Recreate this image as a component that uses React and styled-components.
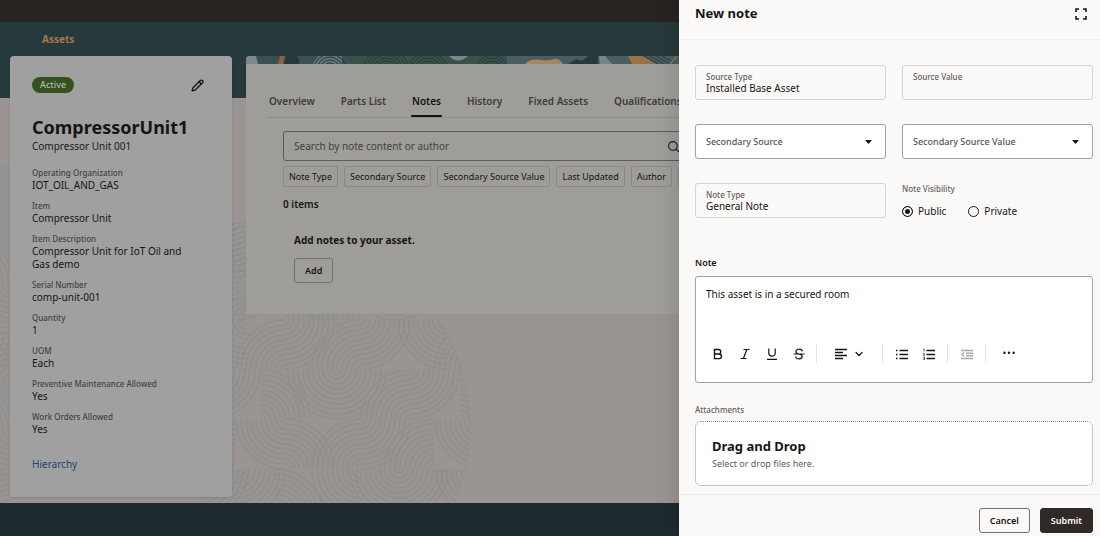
import { useState } from 'react';
import styled, { createGlobalStyle } from 'styled-components';
import { Pencil, Search, Ellipsis, ChevronDown } from 'lucide-react';

const details = [
    ['Operating Organization', 'IOT_OIL_AND_GAS'],
    ['Item', 'Compressor Unit'],
    ['Item Description', 'Compressor Unit for IoT Oil and Gas demo'],
    ['Serial Number', 'comp-unit-001'],
    ['Quantity', '1'],
    ['UOM', 'Each'],
    ['Preventive Maintenance Allowed', 'Yes'],
    ['Work Orders Allowed', 'Yes'],
];

const tabs = ['Overview', 'Parts List', 'Notes', 'History', 'Fixed Assets', 'Qualifications'];
const filters = ['Note Type', 'Secondary Source', 'Secondary Source Value', 'Last Updated', 'Author'];

// quarter circles of the backdrop: [cx, cy, quadrant]
const shells = [
    [231, 222, 'br'], [247, 271, 'tl'], [247, 320, 'tl'], [236, 271, 'br'],
    [285, 320, 'tr'], [330, 271, 'bl'], [361, 320, 'tl'], [395, 271, 'bl'], [395, 271, 'br'],
    [247, 320, 'bl'], [285, 369, 'tl'], [285, 320, 'br'], [361, 369, 'tl'], [361, 320, 'br'], [447, 320, 'bl'], [484, 369, 'tl'],
    [211, 370, 'br'], [261, 419, 'tr'], [337, 370, 'bl'], [337, 370, 'br'], [410, 419, 'tl'], [410, 370, 'br'], [460, 419, 'tr'],
    [285, 420, 'bl'], [236, 468, 'tl'], [285, 468, 'tr'], [361, 468, 'tl'], [361, 420, 'br'], [434, 468, 'tl'], [484, 420, 'bl'],
    [199, 469, 'br'], [236, 469, 'br'], [275, 518, 'tr'], [361, 469, 'bl'], [399, 469, 'bl'], [399, 469, 'br'], [485, 469, 'bl'],
    [-36, 284, 'tr'], [12, 284, 'bl'], [-30, 333, 'br'], [12, 382, 'tl'], [-36, 431, 'tr'], [12, 431, 'bl'], [12, 518, 'tl'],
];
const rings = [4, 9, 14, 19, 24, 29, 34, 39, 44, 49];

const ringPath = (cx, cy, quad, r) => {
    const sx = quad[1] === 'r' ? 1 : -1;
    const sy = quad[0] === 'b' ? 1 : -1;
    return `M${cx + sx * r} ${cy}A${r} ${r} 0 0 ${sx * sy > 0 ? 1 : 0} ${cx} ${cy + sy * r}`;
};

const Backdrop = () => (
    <BackdropSvg width="480" height="503" viewBox="0 0 480 503" aria-hidden="true">
        <clipPath id="disc">
            <path d="M0 163H247V503H0Z" />
            <circle cx="281" cy="425" r="190" />
        </clipPath>
        <path d="M0 167L12 162V503H0Z" fill="#969492" />
        <g clipPath="url(#disc)">
            {shells.map(([cx, cy, q]) => (
                <path key={`f${cx}-${cy}-${q}`} d={`${ringPath(cx, cy, q, 49)}L${cx} ${cy}Z`} fill="#979492" />
            ))}
            {shells.map(([cx, cy, q]) => (
                <path key={`r${cx}-${cy}-${q}`} d={rings.map((r) => ringPath(cx, cy, q, r)).join('')}
                    fill="none" stroke="#8f8d8b" strokeWidth="1.1" />
            ))}
        </g>
    </BackdropSvg>
);

const arcs = (cx, cy, list) => list.map((r) => <circle key={`${cx}-${r}`} cx={cx} cy={cy} r={r} />);

const BannerArt = () => (
    <svg width="450" height="8" viewBox="0 0 450 8" aria-hidden="true">
        <rect width="450" height="8" fill="#3a5053" />
        <path d="M0 0H10L12 8H0Z" fill="#7f888d" />
        <path d="M34 0H39L37 8H32Z" fill="#8f603c" />
        <path d="M40 0H51Q54 4 53 8H38Z" fill="#26383b" />
        <path d="M72 0H96V8H67Z" fill="#62737a" />
        <rect x="97" width="164" height="8" fill="#385149" />
        <g fill="none" stroke="#263b3d" strokeWidth="1">
            {arcs(84, 14, [4, 7, 10, 13, 16])}
            {arcs(140, 16, [5, 8, 11, 14, 17, 20, 23])}
            {arcs(182, 16, [5, 8, 11, 14, 17, 20])}
            {arcs(246, 15, [4, 7, 10, 13, 16])}
        </g>
        <path d="M203 0H222Q212 9 203 0Z" fill="#7b8790" />
        <path d="M261 0H450V8H261Z" fill="#4a5e62" />
        <path d="M279 8Q284 2 296 4Q304 5 308 3Q313 2 317 8Z" fill="#a58661" />
        <path d="M322 8L330 3Q336 7 342 0H352V8Z" fill="#26383b" />
        <path d="M353 0H359L366 8H354Z" fill="#76838a" />
        <path d="M382 0H396L410 8H386Z" fill="#9a7243" />
        <path d="M398 0L412 8M404 0L418 8M410 0L424 8M416 0L428 7" stroke="#2c4144" />
        <path d="M431 0L424 8" stroke="#9a7243" strokeWidth="1.5" />
    </svg>
);

const Icon = ({ d, children, w = 12, sw = 1.2 }) => (
    <svg width={w} height="12" viewBox={`0 0 ${w} 12`} fill="none" stroke="currentColor" strokeWidth={sw} aria-hidden="true">
        <path d={d} />
        {children}
    </svg>
);

const App = () => {
    const [note, setNote] = useState('This asset is in a secured room');
    const [visibility, setVisibility] = useState('Public');

    return (
        <Page>
            <GlobalStyle />
            <TopBar />
            <Content>
                <Backdrop />
                <PageTitle>Assets</PageTitle>
                <Columns>
                    <AssetCard>
                        <CardTop>
                            <Status>Active</Status>
                            <IconButton aria-label="Edit"><Pencil size={13} strokeWidth={2.4} /></IconButton>
                        </CardTop>
                        <AssetName>CompressorUnit1</AssetName>
                        <AssetText>Compressor Unit 001</AssetText>
                        <Details>
                            {details.map(([label, value]) => (
                                <div key={label}>
                                    <dt>{label}</dt>
                                    <dd>{value}</dd>
                                </div>
                            ))}
                        </Details>
                        <CardLink href="#hierarchy">Hierarchy</CardLink>
                    </AssetCard>
                    <NotesPanel>
                        <Banner><BannerArt /></Banner>
                        <Tabs>
                            {tabs.map((tab) => (
                                <Tab key={tab} $active={tab === 'Notes'}>{tab}</Tab>
                            ))}
                        </Tabs>
                        <NotesBody>
                            <SearchBox>
                                <input type="text" aria-label="Search" placeholder="Search by note content or author" />
                                <Search size={13} strokeWidth={2} />
                            </SearchBox>
                            <Filters>
                                {filters.map((name) => <Filter key={name}>{name}</Filter>)}
                                <Filter><Ellipsis size={12} /></Filter>
                            </Filters>
                            <Count>0 items</Count>
                            <Empty>
                                <p>Add notes to your asset.</p>
                                <Button>Add</Button>
                            </Empty>
                        </NotesBody>
                    </NotesPanel>
                </Columns>
            </Content>
            <PageFooter />

            <Drawer>
                <DrawerHeader>
                    <h2>New note</h2>
                    <IconButton aria-label="Expand">
                        <Icon d="M1 4V1H4M8 1H11V4M11 8V11H8M4 11H1V8" sw={1.6} />
                    </IconButton>
                </DrawerHeader>
                <DrawerBody>
                    <FieldGrid>
                        <Field>
                            <label htmlFor="sourceType">Source Type</label>
                            <input id="sourceType" readOnly value="Installed Base Asset" />
                        </Field>
                        <Field>
                            <label htmlFor="sourceValue">Source Value</label>
                            <input id="sourceValue" readOnly value="" />
                        </Field>
                        <SelectField name="Secondary Source" />
                        <SelectField name="Secondary Source Value" />
                        <Field>
                            <label htmlFor="noteType">Note Type</label>
                            <input id="noteType" readOnly value="General Note" />
                        </Field>
                        <Visibility>
                            <legend>Note Visibility</legend>
                            <RadioRow>
                                {['Public', 'Private'].map((v) => (
                                    <Radio key={v}>
                                        <input type="radio" name="visibility" checked={visibility === v} onChange={() => setVisibility(v)} />
                                        {v}
                                    </Radio>
                                ))}
                            </RadioRow>
                        </Visibility>
                    </FieldGrid>
                    <NoteLabel htmlFor="note">Note</NoteLabel>
                    <Editor>
                        <textarea id="note" value={note} onChange={(e) => setNote(e.target.value)} />
                        <Toolbar>
                            <ToolGroup>
                                <Tool aria-label="Bold">
                                    <Icon d="M2.5 1.5H6.5A2.2 2.2 0 0 1 6.5 6H2.5ZM2.5 6H7.2A2.3 2.3 0 0 1 7.2 10.6H2.5Z" sw={1.4} />
                                </Tool>
                                <Tool aria-label="Italic"><Icon d="M4.5 1.5H10.5M1.5 10.5H7.5M7.8 1.5L4.4 10.5" /></Tool>
                                <Tool aria-label="Underline"><Icon d="M2.8 .5V5A3.2 3.2 0 0 0 9.2 5V.5M1 11.3H11" /></Tool>
                                <Tool aria-label="Strikethrough">
                                    <Icon d="M9.2 3.4A3 2.4 0 0 0 6 1.2C4.2 1.2 2.9 2.2 2.9 3.5C2.9 5 4.2 5.6 6 6C8 6.4 9.2 7.2 9.2 8.6C9.2 10 7.9 10.9 6 10.9A3.1 2.5 0 0 1 2.7 8.5M.5 6H11.5" />
                                </Tool>
                            </ToolGroup>
                            <ToolGroup>
                                <Tool aria-label="Align" $width={55}>
                                    <Icon d="M0 1.5H12M0 4.5H8M0 7.5H12M0 10.5H8" sw={1.5} />
                                    <ChevronDown size={12} strokeWidth={2.4} />
                                </Tool>
                            </ToolGroup>
                            <ToolGroup>
                                <Tool aria-label="Bulleted list"><Icon d="M0 2.5H1.5M3.5 2.5H12M0 6.5H1.5M3.5 6.5H12M0 10.5H1.5M3.5 10.5H12" sw={1.4} /></Tool>
                                <Tool aria-label="Numbered list">
                                    <Icon d="M3.5 2.5H12M3.5 6.5H12M3.5 10.5H12" sw={1.4}>
                                        <path d="M.3 1.2H1.2V3.5M.2 5.5H1.6L.4 7.5H1.8M.2 9.2H1.5V11.5H.2M.6 10.3H1.5" strokeWidth=".7" />
                                    </Icon>
                                </Tool>
                            </ToolGroup>
                            <ToolGroup>
                                <Tool aria-label="Outdent" disabled>
                                    <Icon d="M0 2.5H12M5 5.2H12M5 7.8H12M0 10.5H12M3 4.6L1 6.5L3 8.4" sw={1.4} />
                                </Tool>
                            </ToolGroup>
                            <ToolGroup>
                                <Tool aria-label="More" $width={35}>
                                    <svg width="12" height="12" viewBox="0 0 12 12" fill="currentColor" aria-hidden="true">
                                        <circle cx="1.4" cy="4.8" r="1.2" /><circle cx="6" cy="4.8" r="1.2" /><circle cx="10.6" cy="4.8" r="1.2" />
                                    </svg>
                                </Tool>
                            </ToolGroup>
                        </Toolbar>
                    </Editor>
                    <AttachLabel>Attachments</AttachLabel>
                    <DropZone>
                        <h3>Drag and Drop</h3>
                        <p>Select or drop files here.</p>
                    </DropZone>
                </DrawerBody>
                <DrawerFooter>
                    <Button>Cancel</Button>
                    <Button $primary>Submit</Button>
                </DrawerFooter>
            </Drawer>
        </Page>
    );
};

const SelectField = ({ name }) => (
    <SelectBox>
        <select aria-label={name}>
            <option>{name}</option>
        </select>
        <svg width="7" height="4" viewBox="0 0 7 4" aria-hidden="true"><path d="M0 0H7L3.5 4Z" fill="#161513" /></svg>
    </SelectBox>
);

export default App;

const GlobalStyle = createGlobalStyle`
    * {
        box-sizing: border-box;
        margin: 0;
        padding: 0;
    }
    body {
        font-family: "Noto Sans", "Open Sans", sans-serif;
        font-size: 10px;
        line-height: 13px;
        color: #161513;
    }
    button, input, select, textarea {
        font: inherit;
        color: inherit;
        background: none;
        border: none;
        outline: none;
    }
`;

const Page = styled.div`
    display: flex;
    flex-direction: column;
    min-height: 100vh;
    position: relative;
    overflow: hidden;
    background-color: #9a9492;
`;
const TopBar = styled.header`
    height: 22px;
    background-color: #272320;
`;
const Content = styled.main`
    padding: 0 0 6px 10px;
    background: linear-gradient(#26393c 76px, #9a9492 76px);
`;
const BackdropSvg = styled.svg`
    position: absolute;
    left: 0;
    top: 0;
`;
const PageTitle = styled.h1`
    height: 34px;
    padding: 11px 32px 0;
    font-size: 10px;
    line-height: 13px;
    font-weight: 700;
    color: #a5784d;
`;
const Columns = styled.div`
    display: flex;
    align-items: flex-start;
    gap: 14px;
    position: relative;
`;
const PageFooter = styled.footer`
    flex: 1;
    position: relative;
    min-height: 33px;
    background-color: #1e2a2f;
`;

const AssetCard = styled.section`
    flex: none;
    width: 222px;
    padding: 21px 22px 26px;
    border-radius: 4px;
    background-color: #a0a0a0;
    box-shadow: 0 1px 3px rgba(0, 0, 0, 0.12);
`;
const CardTop = styled.div`
    display: flex;
    align-items: center;
    justify-content: space-between;
    height: 16px;
    padding-right: 6px;
`;
const Status = styled.span`
    padding: 0 8px;
    border-radius: 8px;
    font-size: 9px;
    line-height: 16px;
    font-weight: 500;
    color: #b4b9ae;
    background-color: #36501f;
`;
const IconButton = styled.button`
    display: flex;
    cursor: pointer;
`;
const AssetName = styled.h2`
    margin-top: 22px;
    font-size: 18px;
    line-height: 25px;
    font-weight: 700;
`;
const AssetText = styled.p`
    color: #1b1a19;
`;
const Details = styled.dl`
    display: grid;
    gap: 8px;
    margin-top: 14px;
    padding-right: 16px;
    dt {
        font-size: 8px;
        line-height: 12px;
        font-weight: 500;
        color: #444342;
    }
`;
const CardLink = styled.a`
    display: block;
    margin-top: 22px;
    color: #1f4270;
    text-decoration: none;
`;

const NotesPanel = styled.section`
    flex: 1;
    min-width: 0;
    padding-bottom: 31px;
    border-radius: 4px 4px 0 0;
    overflow: hidden;
    background-color: #9e9d9a;
`;
const Banner = styled.div`
    display: flex;
    height: 8px;
    background-color: #4a5e62;
`;
const Tabs = styled.nav`
    display: flex;
    gap: 24px;
    margin: 28px 0 0 21px;
    padding-left: 1px;
    border-bottom: 1px solid #8c8b88;
`;
const Tab = styled.button`
    height: 25px;
    padding: 0 1px 4px;
    font-weight: 600;
    white-space: nowrap;
    cursor: pointer;
    color: ${(props) => (props.$active ? '#141312' : '#3d3c3a')};
    border-bottom: 2px solid ${(props) => (props.$active ? '#141312' : 'transparent')};
    border-radius: 1px;
`;
const NotesBody = styled.div`
    padding: 13px 0 0 37px;
`;
const SearchBox = styled.label`
    display: flex;
    align-items: center;
    max-width: 408px;
    height: 30px;
    padding: 0 10px;
    border: 1px solid #5d5c5a;
    border-radius: 3px;
    input {
        flex: 1;
        min-width: 0;
    }
    input::placeholder {
        color: #424140;
        opacity: 1;
    }
`;
const Filters = styled.div`
    display: flex;
    gap: 6px;
    margin-top: 5px;
`;
const Filter = styled.button`
    flex: none;
    height: 21px;
    padding: 0 5px;
    border: 1px solid #8a8987;
    border-radius: 2px;
    font-size: 9px;
    cursor: pointer;
`;
const Count = styled.p`
    margin-top: 11px;
    font-weight: 600;
`;
const Empty = styled.div`
    padding: 23px 0 0 11px;
    p {
        margin-bottom: 11px;
        font-weight: 700;
    }
`;
const Button = styled.button`
    height: 25px;
    padding: 0 10px;
    border: 1px solid ${(props) => (props.$primary ? '#2f2a27' : '#74726f')};
    border-radius: 3px;
    font-size: 9px;
    font-weight: 600;
    cursor: pointer;
    color: ${(props) => (props.$primary ? '#ffffff' : 'inherit')};
    background-color: ${(props) => (props.$primary ? '#2f2a27' : 'transparent')};
`;

const Drawer = styled.aside`
    position: absolute;
    top: 0;
    right: 0;
    bottom: 0;
    display: flex;
    flex-direction: column;
    width: 421px;
    max-width: 100%;
    background-color: #fbf9f8;
    box-shadow: 0 0 24px rgba(0, 0, 0, 0.16);
`;
const DrawerHeader = styled.header`
    display: flex;
    align-items: center;
    justify-content: space-between;
    height: 40px;
    padding: 0 13px 12px 16px;
    border-bottom: 1px solid #f1efed;
    h2 {
        font-size: 13px;
        font-weight: 700;
    }
`;
const DrawerBody = styled.div`
    flex: 1;
    padding: 25px 7px 0 16px;
`;
const FieldGrid = styled.div`
    display: grid;
    grid-template-columns: 1fr 1fr;
    gap: 24px 16px;
`;
const Field = styled.div`
    height: 35px;
    padding: 5px 10px 0;
    border: 1px solid #d6d4d2;
    border-radius: 3px;
    label {
        display: block;
        font-size: 8px;
        line-height: 11px;
        font-weight: 500;
        color: #5f5d5a;
    }
    input {
        display: block;
        width: 100%;
        height: 12px;
    }
`;
const SelectBox = styled.div`
    display: flex;
    align-items: center;
    height: 35px;
    padding-right: 13px;
    border: 1px solid #a3a19f;
    border-radius: 3px;
    background-color: #ffffff;
    select {
        flex: 1;
        min-width: 0;
        height: 100%;
        padding-left: 10px;
        appearance: none;
        font-size: 9px;
        font-weight: 500;
        color: #55534f;
    }
`;
const Visibility = styled.fieldset`
    border: none;
    legend {
        font-size: 8px;
        line-height: 12px;
        font-weight: 500;
        color: #5f5d5a;
    }
`;
const RadioRow = styled.div`
    display: flex;
    gap: 22px;
    margin-top: 10px;
`;
const Radio = styled.label`
    display: flex;
    align-items: center;
    gap: 5px;
    input {
        appearance: none;
        width: 11px;
        height: 11px;
        border: 1px solid #161513;
        border-radius: 50%;
    }
    input:checked {
        background-color: #161513;
        box-shadow: inset 0 0 0 2px #fbf9f8;
    }
`;
const NoteLabel = styled.label`
    display: block;
    margin: 39px 0 7px;
    font-size: 9px;
    line-height: 12px;
    font-weight: 600;
`;
const Editor = styled.div`
    border: 1px solid #a3a19f;
    border-radius: 3px;
    background-color: #ffffff;
    textarea {
        display: block;
        width: 100%;
        height: 67px;
        padding: 11px 10px;
        resize: none;
    }
`;
const Toolbar = styled.div`
    display: flex;
    padding: 0 0 19px 8px;
`;
const ToolGroup = styled.div`
    display: flex;
    height: 19px;
    padding: 0 5px;
    border-left: 1px solid #e4e2e0;
    &:first-child {
        padding: 0 4px 0 0;
        border-left: none;
    }
`;
const Tool = styled.button`
    display: flex;
    align-items: center;
    justify-content: center;
    gap: 6px;
    width: ${(props) => props.$width || 27}px;
    cursor: pointer;
    &:disabled {
        color: #a9a7a4;
    }
`;
const AttachLabel = styled.p`
    margin: 21px 0 5px;
    font-size: 8px;
    line-height: 12px;
    font-weight: 500;
    color: #5f5d5a;
`;
const DropZone = styled.div`
    height: 65px;
    padding: 15px 16px;
    border: 1px dotted #8f8d8a;
    border-radius: 6px;
    background-color: #ffffff;
    h3 {
        font-size: 13px;
        line-height: 18px;
    }
    p {
        margin-top: 2px;
        font-size: 9px;
        color: #5f5d5a;
    }
`;
const DrawerFooter = styled.footer`
    display: flex;
    justify-content: flex-end;
    gap: 10px;
    height: 42px;
    padding: 13px 7px 0;
    border-top: 1px solid #efedeb;
`;
